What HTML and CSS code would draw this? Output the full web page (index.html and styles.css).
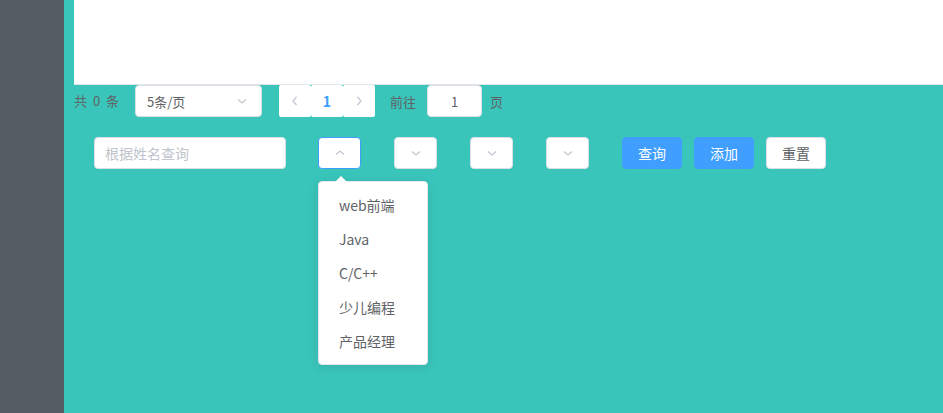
FILE: index.html
```html
<!DOCTYPE html>
<html lang="zh-CN">
<head>
<meta charset="utf-8">
<title>学员管理</title>
<link rel="stylesheet" href="styles.css">
</head>
<body>
<div class="layout">
  <aside class="sidebar"></aside>
  <main class="main">
    <div class="table-area"></div>

    <div class="pagination">
      <span class="total">共 0 条</span>
      <div class="select size-select">
        <span class="select-text">5条/页</span>
        <svg class="chev" width="12" height="12" viewBox="0 0 12 12"><path d="M2 4.5 L6 8 L10 4.5" fill="none" stroke="#c0c4cc" stroke-width="1.1"/></svg>
      </div>
      <div class="pager">
        <button class="pg-btn"><svg width="10" height="12" viewBox="0 0 10 12"><path d="M6.5 2 L3 6 L6.5 10" fill="none" stroke="#c0c4cc" stroke-width="1.2"/></svg></button>
        <button class="pg-btn active">1</button>
        <button class="pg-btn"><svg width="10" height="12" viewBox="0 0 10 12"><path d="M3.5 2 L7 6 L3.5 10" fill="none" stroke="#c0c4cc" stroke-width="1.2"/></svg></button>
      </div>
      <span class="jump-label">前往</span>
      <div class="jump-input">1</div>
      <span class="page-label">页</span>
    </div>

    <div class="filters">
      <div class="text-input placeholder">根据姓名查询</div>
      <div class="mini-select-wrap">
        <div class="mini-select focused">
          <svg width="12" height="12" viewBox="0 0 12 12"><path d="M2 7.5 L6 4 L10 7.5" fill="none" stroke="#c0c4cc" stroke-width="1.1"/></svg>
        </div>
        <div class="dropdown">
          <span class="dropdown-arrow"></span>
          <ul class="dropdown-list">
            <li>web前端</li>
            <li>Java</li>
            <li>C/C++</li>
            <li>少儿编程</li>
            <li>产品经理</li>
          </ul>
        </div>
      </div>
      <div class="mini-select">
        <svg width="12" height="12" viewBox="0 0 12 12"><path d="M2 4.5 L6 8 L10 4.5" fill="none" stroke="#c0c4cc" stroke-width="1.1"/></svg>
      </div>
      <div class="mini-select">
        <svg width="12" height="12" viewBox="0 0 12 12"><path d="M2 4.5 L6 8 L10 4.5" fill="none" stroke="#c0c4cc" stroke-width="1.1"/></svg>
      </div>
      <div class="mini-select">
        <svg width="12" height="12" viewBox="0 0 12 12"><path d="M2 4.5 L6 8 L10 4.5" fill="none" stroke="#c0c4cc" stroke-width="1.1"/></svg>
      </div>
      <div class="buttons">
        <button class="btn primary">查询</button>
        <button class="btn primary">添加</button>
        <button class="btn plain">重置</button>
      </div>
    </div>
  </main>
</div>
</body>
</html>
```

FILE: styles.css
```css
* { box-sizing: border-box; }
html, body {
  margin: 0;
  padding: 0;
  height: 100%;
  overflow: hidden;
}
body {
  font-family: "Noto Sans CJK SC", "Noto Sans", sans-serif;
  color: #606266;
}
.layout {
  display: flex;
  height: 413px;
}
.sidebar {
  width: 64px;
  flex: none;
  background: #545c64;
}
.main {
  flex: 1;
  background: #3ac5bb;
  padding-left: 10px;
}
.table-area {
  height: 85px;
  background: #fff;
  border-bottom: 1px solid #dfe3ea;
}
.pagination {
  display: flex;
  align-items: center;
  height: 32px;
  font-size: 13px;
  color: #606266;
}
.total {
  width: 61px;
  flex: none;
  line-height: 32px;
  word-spacing: 3px;
}
.select {
  display: flex;
  align-items: center;
  justify-content: space-between;
  background: #fff;
  border: 1px solid #dcdfe6;
  border-radius: 4px;
}
.size-select {
  width: 127px;
  height: 32px;
  padding: 0 13px 0 11px;
  margin-right: 17px;
  font-size: 13px;
}
.select-text { color: #606266; }
.pager {
  display: flex;
}
.pg-btn {
  width: 32px;
  height: 32px;
  border: none;
  padding: 0;
  background: #fff;
  border-radius: 2px;
  display: flex;
  align-items: center;
  justify-content: center;
  font-family: inherit;
  font-size: 14px;
  color: #606266;
}
.pg-btn.active {
  color: #409eff;
  font-weight: 700;
}
.jump-label {
  margin-left: 15px;
  margin-right: 11px;
}
.jump-input {
  width: 55px;
  height: 32px;
  background: #fff;
  border: 1px solid #dcdfe6;
  border-radius: 4px;
  display: flex;
  align-items: center;
  justify-content: center;
  color: #606266;
}
.page-label {
  margin-left: 8px;
}
.filters {
  display: flex;
  align-items: center;
  margin-top: 20px;
  padding-left: 20px;
  font-size: 14px;
}
.text-input {
  width: 192px;
  height: 32px;
  background: #fff;
  border: 1px solid #dcdfe6;
  border-radius: 4px;
  padding: 0 10px;
  display: flex;
  align-items: center;
  margin-right: 32px;
}
.placeholder { color: #c0c4cc; }
.mini-select-wrap {
  position: relative;
  margin-right: 33px;
}
.mini-select {
  width: 43px;
  height: 32px;
  background: #fff;
  border: 1px solid #dcdfe6;
  border-radius: 4px;
  display: flex;
  align-items: center;
  justify-content: center;
  margin-right: 33px;
}
.mini-select-wrap .mini-select { margin-right: 0; }
.mini-select.focused { border-color: #409eff; }
.buttons {
  display: flex;
  gap: 12px;
}
.btn {
  width: 60px;
  height: 32px;
  border-radius: 4px;
  font-family: inherit;
  font-size: 14px;
  padding: 0;
  display: flex;
  align-items: center;
  justify-content: center;
}
.btn.primary {
  background: #409eff;
  border: 1px solid #409eff;
  color: #fff;
}
.btn.plain {
  background: #fff;
  border: 1px solid #dcdfe6;
  color: #606266;
}
.dropdown {
  position: absolute;
  top: 44px;
  left: 0;
  width: 110px;
  background: #fff;
  border: 1px solid #e4e7ed;
  border-radius: 4px;
  box-shadow: 0 2px 12px rgba(0, 0, 0, 0.1);
  z-index: 10;
}
.dropdown-arrow {
  position: absolute;
  top: -6px;
  left: 16px;
  width: 0;
  height: 0;
  border-left: 6px solid transparent;
  border-right: 6px solid transparent;
  border-bottom: 6px solid #fff;
}
.dropdown-list {
  list-style: none;
  margin: 0;
  padding: 6px 0;
}
.dropdown-list li {
  height: 34px;
  line-height: 34px;
  padding: 0 20px;
  font-size: 14px;
  color: #606266;
  white-space: nowrap;
}
```
